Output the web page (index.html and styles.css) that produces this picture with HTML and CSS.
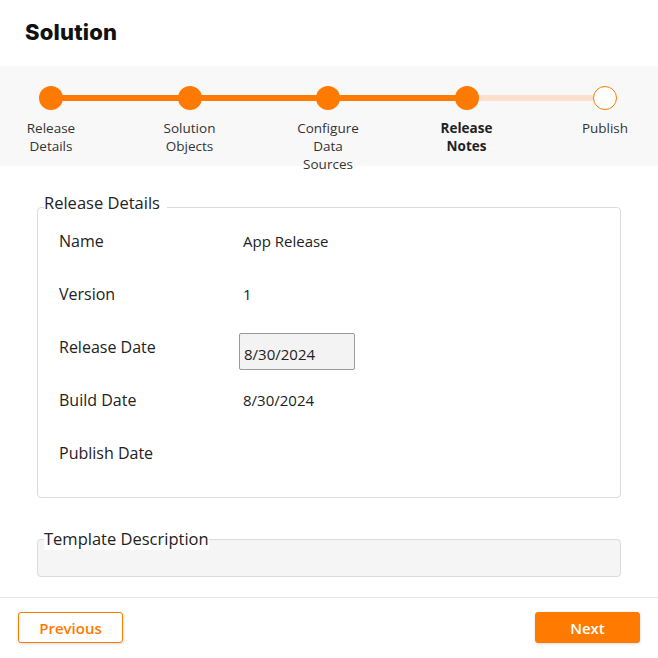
FILE: index.html
```html
<!DOCTYPE html>
<html>
<head>
<meta charset="utf-8">
<link rel="stylesheet" href="styles.css">
</head>
<body>
<div class="page">
  <header class="header"><h1 class="title">Solution</h1></header>
  <div class="stepper">
    <div class="track"></div>
    <div class="step done"><span class="dot"></span><span class="label">Release Details</span></div>
    <div class="step done"><span class="dot"></span><span class="label">Solution Objects</span></div>
    <div class="step done"><span class="dot"></span><span class="label">Configure Data Sources</span></div>
    <div class="step current"><span class="dot"></span><span class="label">Release Notes</span></div>
    <div class="step todo"><span class="dot"></span><span class="label">Publish</span></div>
  </div>
  <main class="content">
    <fieldset class="group details">
      <legend class="legend">Release Details</legend>
      <div class="rows">
        <div class="row"><span class="key">Name</span><span class="val">App Release</span></div>
        <div class="row"><span class="key">Version</span><span class="val">1</span></div>
        <div class="row"><span class="key">Release Date</span><span class="val"><span class="input">8/30/2024</span></span></div>
        <div class="row"><span class="key">Build Date</span><span class="val">8/30/2024</span></div>
        <div class="row"><span class="key">Publish Date</span><span class="val"></span></div>
      </div>
    </fieldset>
    <fieldset class="group desc">
      <legend class="legend tight">Template Description</legend>
    </fieldset>
  </main>
  <footer class="footer">
    <button class="btn prev">Previous</button>
    <button class="btn next">Next</button>
  </footer>
</div>
</body>
</html>
```
FILE: styles.css
```css
html, body { margin: 0; padding: 0; background: #fff; }
body { font-family: "Open Sans", "Noto Sans", sans-serif; color: #222; }
.page { width: 658px; height: 658px; overflow: hidden; }
.header { height: 66px; box-sizing: border-box; padding: 18px 0 0 25px; }
.title { margin: 0; font-family: Inter, sans-serif; font-weight: 800; font-size: 22px; line-height: 28px; letter-spacing: 0.2px; color: #111; }

.stepper { position: relative; height: 100px; background: #f8f8f8; box-sizing: border-box; padding: 20px 13px 0 11px; display: flex; justify-content: space-between; align-items: flex-start; }
.track { position: absolute; top: 29px; left: 51px; width: 554px; height: 6px; background: linear-gradient(to right, #ff7a00 0, #ff7a00 415px, #fadfcc 415px, #fadfcc 100%); }
.step { position: relative; width: 80px; display: flex; flex-direction: column; align-items: center; }
.dot { width: 24px; height: 24px; border-radius: 50%; background: #ff7a00; box-sizing: border-box; }
.todo .dot { background: #fff; border: 1px solid #ff7a00; }
.label { margin-top: 9px; font-size: 13.5px; line-height: 18px; text-align: center; color: #333; }
.current .label { font-weight: 700; color: #222; }

.content { padding: 26px 37px 0 37px; }
.group { margin: 0; padding: 0; border: 1px solid #dcdcdc; border-radius: 4px; min-width: 0; }
.legend { margin-left: 6px; padding: 0 7px 8px 0; font-size: 16.5px; font-weight: 500; line-height: 22px; color: #222; }
.legend.tight { padding: 0; background: #fff; }
.details { padding: 0 0 14px 0; }
.rows { margin-top: -4px; }
.row { display: flex; height: 53px; box-sizing: border-box; padding: 12px 0 0 21px; font-size: 15px; line-height: 22px; }
.key { width: 184px; flex: none; font-size: 16px; font-weight: 500; }
.val { flex: 1; }
.input { display: block; width: 116px; height: 37px; box-sizing: border-box; margin: -3px 0 0 -4px; padding: 4px 4px 0; border: 1px solid #9a9a9a; border-radius: 2px; background: #f3f3f3; line-height: 32px; }
.desc { margin-top: 30px; background: #f5f5f5; height: 49px; box-sizing: border-box; }

.footer { margin-top: 20px; border-top: 1px solid #e6e6e6; padding: 14px 18px 0; display: flex; justify-content: space-between; }
.btn { width: 105px; height: 31px; border-radius: 3px; font-family: "Open Sans", sans-serif; font-weight: 600; font-size: 15px; box-shadow: 0 1px 3px rgba(0,0,0,0.15); cursor: pointer; }
.prev { background: #fff; color: #ff7a00; border: 1px solid #ff7a00; }
.next { background: #ff7a00; color: #fff; border: 1px solid #ff7a00; }
```
